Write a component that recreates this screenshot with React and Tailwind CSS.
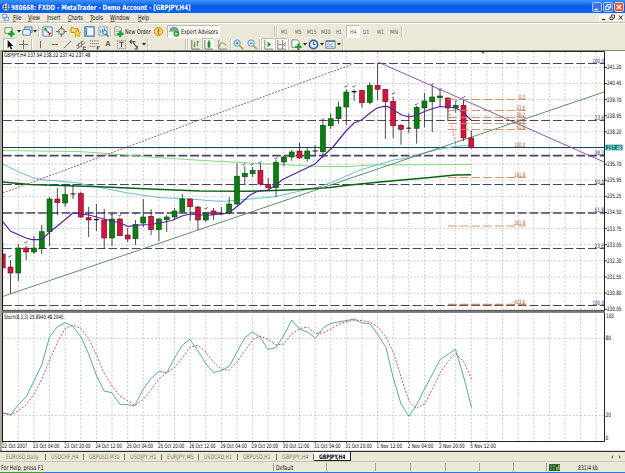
import React from 'react';

const UP = '#0b7d12';
const DOWN = '#d3143c';

// [body top, body bottom, high, low, rising]
const CANDLES = [
  [254, 268, 242, 268, 0], [267, 273, 260, 293.5, 0], [248, 273, 244, 281, 1], [248, 252, 246, 260, 0],
  [248, 252, 236, 254, 1], [231.7, 248.5, 225, 254, 1], [199, 231.7, 197, 246, 1], [199, 202.7, 188, 215, 0],
  [194.5, 203, 184, 207, 1], [193.5, 194.5, 184, 199, 1], [193.3, 217, 191.7, 218, 0], [217.7, 220, 207, 237, 0],
  [219, 220.2, 204, 231, 1], [220, 238, 209, 249, 0], [219, 238, 214, 246, 1], [219, 235.7, 218, 236, 0],
  [235, 239, 228, 242, 0], [224.3, 238.7, 220, 245, 1], [217, 223, 199, 227, 1], [216.3, 229.7, 209, 235, 0],
  [219, 229.7, 218, 241, 1], [217, 219.7, 215, 232, 1], [211, 217, 208, 219, 1], [199, 211.7, 194, 213, 1],
  [199, 206.7, 198.5, 221, 0], [207, 220, 206, 230, 0], [213, 220, 212, 222, 1], [211, 214.3, 208, 220, 0],
  [213.2, 214.3, 207, 215, 1], [204, 213, 197, 214.5, 1], [176.2, 204, 163.7, 205, 1], [173.3, 176.7, 166.3, 184, 1],
  [170.3, 173.7, 167, 177, 1], [170.3, 184, 163.7, 185.7, 0], [184.3, 187.7, 177.7, 189, 0], [162.3, 187.7, 160, 197, 1],
  [157, 162, 156, 166.3, 1], [152, 157, 150, 160.7, 1], [151, 158, 142.7, 158.7, 0], [151, 158.7, 148, 161.7, 1],
  [150.5, 151.5, 145, 156, 1], [125.3, 151.7, 120, 158, 1], [118.7, 125.7, 113.3, 129, 1], [107, 118.7, 101.3, 124, 1],
  [92, 107, 89.3, 125.3, 1], [91, 92.3, 89.3, 100.7, 1], [90.3, 102.7, 90, 107.7, 0], [85.3, 102.3, 82.3, 104.3, 1],
  [85.3, 89.3, 63.3, 100, 0], [89.3, 101.7, 89, 139, 0], [101.3, 125.7, 96.7, 138, 0], [125.3, 129.3, 124, 144.7, 0],
  [127.7, 128.7, 113.3, 133, 1], [107.3, 128.3, 106, 143.7, 1], [101, 108, 93, 127.3, 1], [97, 101.7, 85.7, 132, 1],
  [96, 97.7, 90, 106.7, 1], [98, 108, 97.5, 120.7, 0], [105.3, 108, 102.7, 112.7, 1], [105.3, 138, 99.3, 141, 0],
  [138, 147.7, 130.7, 148.5, 0],
];

const TICKS = [[10, 256], [26, 242], [112, 214], [120, 215], [136, 213], [206, 208], [244, 164], [252, 164], [260, 162],
  [276, 158], [323, 119], [346, 86], [354, 86], [393.5, 93], [416.5, 104], [432.5, 84], [440, 89], [456, 101], [463.5, 97]];

const PRICES = ['241.20', '240.45', '239.70', '238.95', '238.20', null, '236.70', '235.95', '235.25', '234.50', '233.75',
  '233.05', '232.30', '231.55', '230.80', '230.05'];

const LEVELS = [[63.5, '100.0', 1], [120.5, '23.6', 1], [155.7, '38.2', 1.7], [184.5, '50.0', 1], [213, '61.8', 1.7],
  [248.5, '23.6', 1], [305.5, '100.0', 1]];

const FIBS = [[99.5, '0.0'], [110.5, '23.6'], [117.5, '38.2'], [123.5, '50.0'], [129.5, '61.8'], [147.5, '100.0'],
  [177.5, '161.8'], [226, '261.8'], [304.5, '423.6']];

const DATES = ['22 Oct 2007', '23 Oct 04:00', '23 Oct 20:00', '24 Oct 12:00', '25 Oct 04:00', '25 Oct 20:00', '26 Oct 12:00',
  '29 Oct 04:00', '29 Oct 20:00', '30 Oct 12:00', '31 Oct 04:00', '31 Oct 20:00', '1 Nov 12:00', '2 Nov 04:00', '2 Nov 20:00', '5 Nov 12:00'];

const PURPLE = '2.7,221.7 10.7,231.3 26,238 32,239.7 38,239.7 43,238.5 50,231.7 58,225.5 73,213 89,215 100,218 112,221 120,223 128,226.3 140,225 150,224.5 160,223 172,220.5 182,216 190,214 200,215 212,215 229,213 240,204 250,195 258,191 268,190 276,185 283,179.3 300,171.3 315,164 323,156 333,147 346,131 354,123 362,119.7 370,113 377,108 384,106.3 388,106.7 395,111 402,115 409,117 417,115 425,111.3 433,108.5 440,106.5 447,107 456,108 464,113 471,120';
const LIME = '2.7,150.5 78,151.5 100,153 125,155 150,157 200,160.3 240,162.5 290,165 320,166.5 350,166.5 370,165 471,164.5';
const CYAN = '2.7,164 20,172.5 33,177.7 45,180 75,182.5 100,187.5 128,193 160,197.7 190,199 212,200.8 225,201.3 250,199 275,196.7 300,191 320,186.7 335,181 345,176.5 360,170 380,164 395,159.7 405,158.5 420,154 440,149 455,146.5 460,145.7 471,145.7';
const GREEN = '2.7,182 30,184.5 100,186.7 150,189 200,191 250,191.3 300,189.5 330,187.5 350,185 380,182 405,179.7 430,177.5 455,175 471,174.7';

const STOCH_K = '2.7,413 11,414.5 18.3,404.5 26,397 34,381 41.7,365 49.5,337 57,327 65,322.5 73,326.5 81,337 89,355 96.7,376 104,391 112,392.7 120,404.5 128,404.7 134.5,406 143.5,388.5 151.5,378 159,371.5 167,372.5 174.5,358 182.5,345 190,339.3 198,351 206,364 213.5,372.5 221.5,370.5 229.5,366 237,352 245,337.5 252.5,332 260,337 268,349.5 276,347.5 284,335 291.7,320 299.5,329 307.5,332 315.5,338 323.5,327.5 331,323.5 339,321.7 346,320.7 354,319 362,323 370,323.7 378,335 386,347.5 393,377 401,404 409,416.3 417,404 424.5,389 432.5,374 440,359.7 455.5,349.3 464,378 471.5,407.5';
const STOCH_D = '2.7,413 11,415 18,411 26,405 34,394 42,379 50,359 58,341 65,328.7 73,325 81,328.5 89,339 97,356 104,373 112,386 120,396 128,401 135,405.5 143.5,399 151,390 159,379 167,372.5 175,367 183,357 190,347 198,345.5 205,351 213,361.5 221,369 229,370.5 237,362 245,350.5 253,339.5 260,336 268,339.5 276,345 284,344 291.5,334 299.5,328.7 307.5,327 315.5,333.5 323,333 331,329 339,324 347,321.5 355,320 362,320.7 370,322 378,327 386,337 394,354 401,377 409,401 416,408.5 424.5,404 432.5,389 440,373 448,361.5 455.5,353.5 464,362 471.5,379';

const Label = ({ x, y, w, fill = '#000', anchor = 'start', children }) => (
  <text x={x} y={y} fill={fill} textAnchor={anchor} textLength={w} lengthAdjust="spacingAndGlyphs" className="text-[6px]">
    {children}
  </text>
);

/**
 * Chart Component
 * Price panel on top, stochastic oscillator underneath, shared time axis.
 */
const Chart = () => (
  <svg width="625" height="402" viewBox="0 50 625 402" className="block shrink-0 bg-white font-['DejaVu_Sans_Condensed','DejaVu_Sans',sans-serif]">
    {/* Grid */}
    <g stroke="#bcbcbc" strokeWidth="0.8" strokeDasharray="2 1.7">
      {Array.from({ length: 38 }, (_, i) => (
        <line key={i} x1={18.3 + i * 15.62} x2={18.3 + i * 15.62} y1="52" y2="441" />
      ))}
      {PRICES.map((_, i) => (
        <line key={i} x1="3" x2="604" y1={67.3 + i * 16.13} y2={67.3 + i * 16.13} />
      ))}
      <line x1="3" x2="604" y1="338.4" y2="338.4" />
      <line x1="3" x2="604" y1="415.4" y2="415.4" />
    </g>

    {/* Retracement levels */}
    {LEVELS.map(([y, text, weight]) => (
      <g key={y}>
        <line x1="3" x2="604" y1={y} y2={y} stroke="#49416b" strokeWidth={weight} strokeDasharray="8.8 2.9" />
        <Label x="604" y={y - 0.6} w={text.length > 4 ? 11.5 : 9.5} anchor="end" fill="#2f2a5c">{text}</Label>
      </g>
    ))}
    <line x1="3" x2="604" y1="147.5" y2="147.5" stroke="#0a4a5a" strokeWidth="1.1" />

    {/* Moving averages and trend lines */}
    <g fill="none">
      <polyline points={LIME} stroke="#7edc7e" />
      <polyline points={CYAN} stroke="#6bbdd6" />
      <polyline points={GREEN} stroke="#0c6316" strokeWidth="1.5" />
      <line x1="2.7" y1="296.5" x2="604" y2="92" stroke="#4f8455" strokeWidth="0.9" />
      <line x1="378" y1="62" x2="604" y2="162" stroke="#8044a0" strokeWidth="0.9" />
      <polyline points="2.7,193 41,179 205,118 353,64" stroke="#a84858" strokeWidth="0.9" strokeDasharray="2 1.3" />
      <line x1="448" y1="108" x2="456" y2="146" stroke="#b84040" strokeWidth="0.8" strokeDasharray="1.5 1.5" />
    </g>

    {/* Candles */}
    {CANDLES.map(([top, bottom, high, low, rising], i) => {
      const x = 2.7 + i * 7.81;
      const flat = bottom - top < 1.5;
      return (
        <g key={i}>
          <line x1={x} x2={x} y1={high} y2={low} stroke="#222" strokeWidth="0.8" />
          <rect
            x={x - 2.5}
            y={top}
            width="5"
            height={bottom - top}
            fill={flat ? '#111' : rising ? UP : DOWN}
            stroke={flat ? 'none' : rising ? '#064a0a' : '#6d1024'}
            strokeWidth="0.6"
          />
        </g>
      );
    })}
    <polyline points={PURPLE} fill="none" stroke="#5a22a0" strokeWidth="1.2" />
    {TICKS.map(([x, y]) => (
      <path key={x} d={`M${x - 1.5} ${y}l1 1.3 2-2.3`} fill="none" stroke="#3434a8" strokeWidth="0.8" />
    ))}

    {/* Fibonacci expansion */}
    {FIBS.map(([y, text]) => (
      <g key={y}>
        {text !== '100.0' && (
          <line x1="448" x2="526" y1={y} y2={y} stroke="#c98a62" strokeWidth={text === '423.6' ? 1.4 : 0.9} strokeDasharray="8.8 2.9" />
        )}
        <Label x="525.2" y={y - 0.6} w={text.length === 3 ? 6.5 : text.length === 4 ? 9 : 11} anchor="end" fill="#ac4f1d">{text}</Label>
      </g>
    ))}

    {/* Panel frames */}
    <rect x="0" y="50" width="2" height="402" fill="#aaa69b" />
    <path d="M2.5 51V441.5" stroke="#111" />
    <path d="M2 51.5H604.5V441.5H2" fill="none" stroke="#222" />
    <path d="M481 52h4l-2 2z" fill="#777" />
    <rect x="2" y="50" width="623" height="1" fill="#8b897f" />
    <rect x="2" y="310.5" width="603" height="2.4" fill="#777" />
    <path d="M2 310.5H605" stroke="#333" strokeWidth="0.7" />

    {/* Price scale */}
    {PRICES.map((price, i) => price && (
      <g key={price}>
        <line x1="605" x2="607" y1={67.3 + i * 16.13} y2={67.3 + i * 16.13} stroke="#333" />
        <Label x="607" y={69.3 + i * 16.13} w="14.4">{price}</Label>
      </g>
    ))}
    <rect x="605.5" y="144.7" width="17" height="5.6" fill="#087f7c" />
    <Label x="607" y="149.6" w="14.4" fill="#fff">237.48</Label>
    <Label x="606.3" y="318" w="7.5">100</Label>
    <Label x="605.5" y="340.4" w="5.5">80</Label>
    <Label x="605.5" y="417.4" w="5.5">20</Label>
    <Label x="605.5" y="440.4" w="2.8">0</Label>
    <Label x="4" y="57.2" w="86.5">GBPJPY,H4  237.94 238.22 237.42 237.48</Label>

    {/* Stochastic */}
    <polyline points={STOCH_K} fill="none" stroke="#57aaa6" />
    <polyline points={STOCH_D} fill="none" stroke="#b84450" strokeWidth="0.9" strokeDasharray="2 1.6" />
    <Label x="4" y="319.2" w="59.5">Stoch(8,3,3) 25.8940 48.2045</Label>

    {/* Time scale */}
    {DATES.map((date, i) => (
      <g key={date}>
        <line x1={2.7 + i * 31.24} x2={2.7 + i * 31.24} y1="441" y2="443" stroke="#333" strokeWidth="0.8" />
        <Label x={i === 0 ? 2 : 1.7 + i * 31.24} y="447.8" w={date.length > 11 ? 26.5 : 25.5}>{date}</Label>
      </g>
    ))}
    <rect x="0" y="450.8" width="625" height="1.2" fill="#333" />
  </svg>
);

const Icon = ({ children }) => (
  <svg width="11" height="11" viewBox="0 0 12 12" fill="none" className="shrink-0">{children}</svg>
);

// Single line of UI text fitted to a fixed width
const Fit = ({ w, className = '', children }) => (
  <svg width={w} height="9" className="shrink-0 overflow-visible">
    <text x="0" y="6.8" textLength={w} lengthAdjust="spacingAndGlyphs" fill="currentColor" className={className}>{children}</text>
  </svg>
);

const Plus = () => <path d="M8 5v7M4.5 8.5h7" stroke="#16a02c" strokeWidth="2.4" />;
const Sep = () => <span className="box-content h-[11px] w-px shrink-0 border-r border-white bg-[#c5c1ae]"></span>;
const Caret = () => (
  <span className="flex w-[6px] shrink-0 justify-center">
    <svg width="4" height="3" viewBox="0 0 4 3"><path d="M0 0h4L2 2.5z" fill="#222" /></svg>
  </span>
);

const Cell = ({ className, on, children }) => (
  <span className={`${className} ${on ? 'border border-[#c0bdae] border-r-white border-b-white bg-[#f8f7f1]' : ''} flex h-[13px] shrink-0 items-center justify-center`}>
    {children}
  </span>
);

const PERIODS = [['M1', 6.5], ['M5', 6.5], ['M15', 9.5], ['M30', 9.5], ['H1', 5.5], ['H4', 6.5], ['D1', 6], ['W1', 7], ['MN', 8]];

const MENU = [
  ['File', 'w-[15.3px]', 8.5], ['View', 'w-[19px]', 12], ['Insert', 'w-[20.7px]', 13.3], ['Charts', 'w-[22.3px]', 15],
  ['Tools', 'w-[20.5px]', 13], ['Window', 'w-[27.3px]', 19.5], ['Help', 'w-[20px]', 11],
];

const TABS = [
  ['EURUSD,Daily', 'w-[45.5px]', 32.5], ['USDCHF,H4', 'w-[38.5px]', 27.5], ['GBPUSD,M30', 'w-[41px]', 30.5], ['USDJPY,H1', 'w-[37px]', 26.5],
  ['EURJPY,M5', 'w-[37px]', 27], ['USDCAD,H1', 'w-[39px]', 28], ['GBPUSD,H1', 'w-[39px]', 27.5], ['GBPJPY,H4', 'w-[37px]', 26.5],
];

const StandardBar = () => (
  <div className="flex h-[15px] items-center border-t border-white pl-[2px]">
    <Cell className="w-[14px]"><Icon><path d="M1 2h8v6H1z" fill="#f4fff4" stroke="#58845e" /><Plus /></Icon></Cell>
    <Caret />
    <Cell className="w-[10px]"><Icon><path d="M3 1h8v6H3z" fill="#bcd5f4" stroke="#527fae" /><path d="M1 4h8v6H1z" fill="#eef5ff" stroke="#527fae" /></Icon></Cell>
    <Caret />
    <Sep />
    <Cell className="w-[15px]"><Icon><path d="M1 1h10v10H1z" fill="#e8f2ff" stroke="#527fae" /><path d="M3 3l3 3M3 3h2M3 3v2" stroke="#1d9d35" strokeWidth="1.5" /><path d="M9 9L6 6M9 9V7M9 9H7" stroke="#d34232" strokeWidth="1.5" /></Icon></Cell>
    <Cell className="w-[13px]"><Icon><circle cx="6" cy="6" r="3.2" stroke="#777" strokeWidth="1.1" /><path d="M6 0v4M6 8v4M0 6h4M8 6h4" stroke="#777" strokeWidth="1.2" /></Icon></Cell>
    <Cell className="w-[14px]"><Icon><path d="M1 2h3l1 1h4v4H1z" fill="#f8dd72" stroke="#b58a1c" /><path d="M8 4l1.3 2.5 2.7.4-2 2 .4 2.6L8 10.3l-2.4 1.2.4-2.6-2-2 2.7-.4z" fill="#ffd942" stroke="#b58a1c" strokeWidth=".7" /></Icon></Cell>
    <Cell className="w-[14px]"><Icon><path d="M1 1h10v10H1z" fill="#fff" stroke="#3873ba" strokeWidth="1.3" /><path d="M1.500 2h2v8h-2z" fill="#5a91d3" /></Icon></Cell>
    <Cell className="w-[14px]"><Icon><path d="M1 1h9v9H1z" fill="#edf5ff" stroke="#7ba0c8" /><path d="M3 8V4M5 7V3M7 6V2" stroke="#517ba9" /><circle cx="7.500" cy="7" r="2.3" fill="#cfe7fa" stroke="#3a6fa8" /><path d="M9 9l2.500 2.500" stroke="#3a6fa8" strokeWidth="1.4" /></Icon></Cell>
    <Sep />
    <Cell className="w-[13px]"><Icon><path d="M2 1h5l2 2v7H2z" fill="#fff" stroke="#7e8e80" /><path d="M3 4h4M3 6h4" stroke="#999" /><Plus /></Icon></Cell>
    <Fit w={25.5} className="text-[6.500px]">New Order</Fit>
    <Cell className="w-[16px]"><Icon><circle cx="6" cy="6" r="4.500" fill="#f6d058" stroke="#c39a2a" /><path d="M6 3v4M6 8v1.500" stroke="#8c5d05" strokeWidth="1.3" /></Icon></Cell>
    <Cell on className="w-[53px] gap-[1px]">
      <Icon><path d="M1 5c0-5 9-5 9 0z" fill="#4fa8d8" stroke="#3577a0" strokeWidth=".7" /><path d="M0 5.500h11" stroke="#d4a52b" strokeWidth="1.500" /><circle cx="8" cy="8.500" r="3.200" fill="#27a63a" /><path d="M7 7l2.500 1.500L7 10z" fill="#fff" /></Icon>
      <Fit w={37} className="text-[6.500px]">Expert Advisors</Fit>
    </Cell>
    <div className="w-[54px] shrink-0"></div>
    <Sep />
    <Sep />
    <div className="flex items-center text-[#666]">
      {PERIODS.map(([period, w]) => (
        <Cell key={period} on={period === 'H4'} className="w-[13.700px]"><Fit w={w} className="text-[6px]">{period}</Fit></Cell>
      ))}
    </div>
    <Sep />
  </div>
);

const DrawingBar = () => (
  <div className="flex h-[12px] items-center pl-[3px]">
    <Cell on className="w-[13px]"><Icon><path d="M4 1v9l2-2 1.500 3.500 1.500-.8L7.500 7.500h2.700z" fill="#111" /></Icon></Cell>
    <Cell className="w-[15px]"><Icon><path d="M6 1v10M1 6h10" stroke="#666" /></Icon></Cell>
    <Sep />
    <Cell className="w-[14px]"><Icon><path d="M6 2v8" stroke="#666" /></Icon></Cell>
    <Cell className="w-[14px]"><Icon><path d="M3 6h7" stroke="#666" /></Icon></Cell>
    <Cell className="w-[13px]"><Icon><path d="M2 10l8-8" stroke="#666" /></Icon></Cell>
    <Cell className="w-[13px]"><Icon><path d="M1 8l8-6M2 11l9-7M4 4v6M7 2v7" stroke="#666" strokeWidth=".9" /><path d="M9 8v4M9 9h3M9 11.500h3" stroke="#333" strokeWidth=".8" /></Icon></Cell>
    <Cell className="w-[14px]"><Icon><path d="M1 2h10M1 5h10M1 8h7" stroke="#777" strokeDasharray="1.500 .8" /><path d="M9 8v4M9 8.500h3M9 10h2" stroke="#333" strokeWidth=".8" /></Icon></Cell>
    <Cell className="w-[14px] text-[7px] font-bold text-[#666]">A</Cell>
    <Cell className="w-[13px]"><Icon><path d="M1.500 1.500h9v9h-9z" stroke="#777" strokeDasharray="1 1" /><path d="M3.500 3.500h5M6 3.500V9" stroke="#555" strokeWidth="1.200" /></Icon></Cell>
    <Cell className="w-[13px]"><Icon><path d="M1 3h6M3 1L1 3l2 2M4 3l5 7M9 7v4H6" stroke="#444" strokeWidth="1.100" /></Icon></Cell>
    <Caret />
    <Sep />
    <div className="w-[36px] shrink-0"></div>
    <Sep />
    <Sep />
    <Cell className="w-[13px]"><Icon><path d="M2 1v10h9" stroke="#666" /><path d="M5 3v6M8 2v6M8 3h2M4 7h1" stroke="#2b8738" /></Icon></Cell>
    <Cell on className="w-[12px]"><Icon><path d="M2 1v10h9" stroke="#666" /><path d="M5 3h3v6H5z" fill="#1a9a2c" /><path d="M6.500 1v9" stroke="#1a7a2c" /></Icon></Cell>
    <Cell className="w-[16px]"><Icon><path d="M2 1v10h9" stroke="#777" /><path d="M2 9c2-6 4-6 8-2" stroke="#4c9656" /></Icon></Cell>
    <Sep />
    <Cell className="w-[13px]"><Icon><circle cx="4.500" cy="4.500" r="3.500" fill="#d6edff" stroke="#4b91cc" /><path d="M3 4.500h3M4.500 3v3" stroke="#246da9" /><path d="M7.500 7.500l3.500 3.500" stroke="#c9a13b" strokeWidth="1.800" /></Icon></Cell>
    <Cell className="w-[14px]"><Icon><circle cx="4.500" cy="4.500" r="3.500" fill="#d6edff" stroke="#4b91cc" /><path d="M3 4.500h3" stroke="#246da9" /><path d="M7.500 7.500l3.500 3.500" stroke="#c9a13b" strokeWidth="1.800" /></Icon></Cell>
    <Sep />
    <Cell on className="w-[14px]"><Icon><path d="M2 1v10h9" stroke="#777" /><path d="M5 3l4 3-4 3z" fill="#1a9a2c" /></Icon></Cell>
    <Cell on className="w-[13px]"><Icon><path d="M2 1v10h9M7 1v10" stroke="#777" /><path d="M3 6h3M11 4L8 6l3 2" stroke="#a8463c" /></Icon></Cell>
    <Sep />
    <Cell className="w-[12px]"><Icon><path d="M1 1h6l2 2v6H1z" fill="#fff" stroke="#738373" /><Plus /></Icon></Cell>
    <Caret />
    <Cell className="w-[11px]"><Icon><circle cx="6" cy="6" r="4.500" fill="#e5f3ff" stroke="#2767b0" strokeWidth="1.800" /><path d="M6 3.500V6h2" stroke="#333" /></Icon></Cell>
    <Caret />
    <Cell className="w-[11px]"><Icon><path d="M1 2h10v8H1z" fill="#fff" stroke="#55779b" /><path d="M1 2.500h10" stroke="#55779b" strokeWidth="1.500" /><path d="M2 6l2-1 2 1 3-1M2 8.500l3-1 4 1" stroke="#5888b8" /></Icon></Cell>
    <Caret />
    <Sep />
  </div>
);

export default function App() {
  return (
    <div className="flex h-[473px] w-[625px] flex-col overflow-hidden bg-[#ebe8d7] font-['DejaVu_Sans_Condensed','DejaVu_Sans',sans-serif] leading-none text-[#111]">
      {/* Title bar */}
      <div className="flex h-[13px] shrink-0 items-center bg-gradient-to-b from-[#3d95ff] via-[#0757e4] to-[#0565f5] pl-[2px] pr-[1px]">
        <svg width="8" height="8" viewBox="0 0 10 10"><circle cx="5" cy="5" r="4.500" fill="#d2d8e4" /><path d="M1 4h8M1 7h8M3 1v8M7 1v8" stroke="#4a5365" /></svg>
        <svg width="180" height="11" className="ml-[1px] overflow-visible">
          <text x="0" y="8.600" fill="#fff" textLength="179.500" lengthAdjust="spacingAndGlyphs" className="text-[7.200px] font-bold">980668: FXDD - MetaTrader - Demo Account - [GBPJPY,H4]</text>
        </svg>
        <div className="ml-auto flex gap-[1px]">
          <svg width="10" height="10" viewBox="0 0 10 10"><rect x=".5" y=".5" width="9" height="9" rx="1.500" fill="#3873ea" stroke="#a9c5f9" /><path d="M2.500 7.500H6" stroke="#fff" strokeWidth="1.400" /></svg>
          <svg width="10" height="10" viewBox="0 0 10 10"><rect x=".5" y=".5" width="9" height="9" rx="1.500" fill="#3873ea" stroke="#a9c5f9" /><path d="M4 4V2.500h3.500V6H6M2.500 4.500H6v3H2.500z" fill="none" stroke="#fff" /></svg>
          <svg width="10" height="10" viewBox="0 0 10 10"><rect x=".5" y=".5" width="9" height="9" rx="1.500" fill="#dd5232" stroke="#f3c3b4" /><path d="M2.700 2.700l4.600 4.600M7.300 2.700L2.700 7.300" stroke="#fff" strokeWidth="1.400" /></svg>
        </div>
      </div>

      {/* Menu bar */}
      <div className="flex h-[9px] shrink-0 items-center pl-[2px]">
        <svg width="7" height="7" viewBox="0 0 8 8" className="mr-[3.700px] shrink-0"><path d="M.5.5h5v4h-5zM2.500 3.500h5v4h-5z" fill="#e7f4ff" stroke="#5799c8" /></svg>
        {MENU.map(([name, width, w]) => (
          <span key={name} className={`${width} h-[9px] shrink-0`}>
            <Fit w={w} className="text-[6.800px]"><tspan className="underline decoration-[0.5px]">{name[0]}</tspan>{name.slice(1)}</Fit>
          </span>
        ))}
        <svg width="25" height="7" viewBox="0 0 25 7" className="ml-auto mr-[1px] bg-[#f8f7f2]"><path d="M3 5.500h3" stroke="#222" strokeWidth="1.200" /><path d="M12.500 2.500V1H15.500V4H14.500M11 3h3v2.500h-3z" fill="none" stroke="#333" strokeWidth=".9" /><path d="M20 1.500l3.500 4M23.500 1.500l-3.500 4" stroke="#222" /></svg>
      </div>
      <div className="h-[28px] shrink-0 border-t border-[#c5c2b1]">
        <StandardBar />
        <DrawingBar />
      </div>

      <Chart />

      {/* Chart tabs */}
      <div className="flex h-[9px] shrink-0 items-center text-[#858272]">
        {TABS.map(([name, width, w]) => (
          <span key={name} className={`${width} flex h-[6px] shrink-0 items-center justify-center border-r border-[#77746a]`}>
            <Fit w={w} className="text-[6.200px]">{name}</Fit>
          </span>
        ))}
        <span className="flex h-[9px] w-[37px] shrink-0 items-center justify-center border border-t-0 border-l-0 border-[#222] bg-white text-black">
          <Fit w={26.5} className="text-[6.200px] font-bold">GBPJPY,H4</Fit>
        </span>
        <svg width="14" height="6" viewBox="0 0 14 6" className="ml-auto mr-[2px]"><path d="M4 1L2 3l2 2zM10 1l2 2-2 2z" fill="#888" /></svg>
      </div>

      {/* Status bar */}
      <div className="flex h-[11px] shrink-0 items-center border-t border-[#c9c5b3]">
        <span className="flex w-[273px] shrink-0 items-center pl-[1px]"><Fit w={42.5} className="text-[6.500px]">For Help, press F1</Fit></span>
        <span className="flex h-[8px] w-[53px] shrink-0 items-center border-l border-[#aaa798] pl-[1.500px]"><Fit w={17.5} className="text-[6.500px]">Default</Fit></span>
        <span className="h-[8px] w-[49px] shrink-0 border-l border-[#aaa798]"></span>
        <span className="h-[8px] w-[35px] shrink-0 border-l border-[#aaa798]"></span>
        <span className="h-[8px] w-[35px] shrink-0 border-l border-[#aaa798]"></span>
        <span className="h-[8px] w-[34px] shrink-0 border-l border-[#aaa798]"></span>
        <span className="h-[8px] w-[34px] shrink-0 border-l border-[#aaa798]"></span>
        <span className="h-[8px] w-[33px] shrink-0 border-l border-[#aaa798]"></span>
        <span className="flex h-[8px] w-[79px] shrink-0 items-center gap-[18px] border-l border-[#aaa798] pl-[2px]">
          <svg width="11" height="7" viewBox="0 0 11 7"><path d="M0 0h11v7H0z" fill="#2c6a32" /><path d="M2 1v5M5 1v5" stroke="#6faa3e" /><path d="M8 3v3M10 1v5" stroke="#e5d34c" /><path d="M0 4h7" stroke="#234d8a" strokeWidth=".8" /></svg>
          <Fit w={20} className="text-[6.500px]">831/4 kb</Fit>
        </span>
      </div>
      <div className="flex h-[1px] shrink-0 bg-[#2878e2]"><span className="w-[44px] bg-[#3a9a3c]"></span></div>
    </div>
  );
}
